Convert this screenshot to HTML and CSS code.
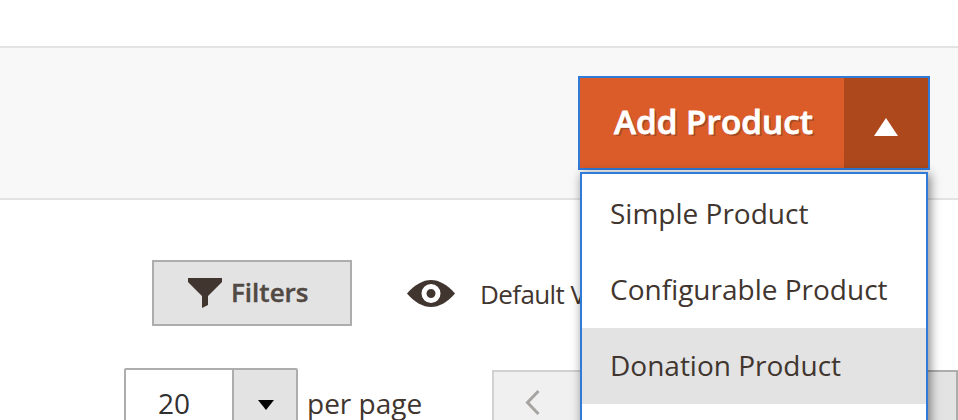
FILE: index.html
```html
<!DOCTYPE html>
<html lang="en">
<head>
<meta charset="utf-8">
<title>Products</title>
<link rel="stylesheet" href="styles.css">
</head>
<body>
<header class="page-actions">
  <div class="split">
    <button class="split-main"><span class="split-label">Add Product</span></button>
    <button class="split-toggle" aria-label="Toggle menu"><svg width="24" height="18" viewBox="0 0 24 18"><path d="M12 0L24 18H0z" fill="#fff"/></svg></button>
    <ul class="menu">
      <li class="menu-item">Simple Product</li>
      <li class="menu-item">Configurable Product</li>
      <li class="menu-item active">Donation Product</li>
      <li class="menu-item"></li>
    </ul>
  </div>
</header>
<main>
  <div class="tools">
    <button class="filters">
      <svg width="34" height="30" viewBox="0 0 34 30"><path d="M0 0H34V4L20 18V27L14 30V18L0 4z" fill="#41362f"/></svg>
      <span class="filters-label">Filters</span>
    </button>
    <div class="view">
      <svg width="48" height="27" viewBox="0 0 48 27"><path d="M0 13.5C8 4.500 16 0 24 0S40 4.500 48 13.500C40 22.500 32 27 24 27S8 22.500 0 13.500z" fill="#41362f"/><circle cx="24" cy="13.500" r="7" fill="none" stroke="#fff" stroke-width="5"/></svg>
      <span class="view-label">Default View</span>
    </div>
  </div>
  <div class="paging">
    <div class="select">
      <span class="select-value">20</span>
      <span class="select-arrow"><svg width="16" height="10" viewBox="0 0 16 10"><path d="M0 0H16L8 10z" fill="#000"/></svg></span>
    </div>
    <span class="per-page">per page</span>
    <div class="pager">
      <button class="prev" aria-label="Previous"><svg width="16" height="27" viewBox="0 0 16 27"><path d="M13.500 2L2.500 13.500L13.500 25" fill="none" stroke="#a6a3a0" stroke-width="3"/></svg></button>
      <button class="next" aria-label="Next"></button>
    </div>
  </div>
</main>
</body>
</html>
```
FILE: styles.css
```css
* { box-sizing: border-box; }
html { overflow: hidden; }
body { margin: 0; padding-top: 46px; height: 420px; overflow: hidden; background: #fff; color: #41362f; font-family: "Open Sans", sans-serif; font-size: 28px; }
button { margin: 0; padding: 0; border: 0; font: inherit; color: inherit; }
svg { display: block; flex: none; }
span { white-space: nowrap; }
.page-actions { height: 154px; padding: 28px 28px 0 0; display: flex; justify-content: flex-end; background: #f8f8f8; border: solid #e3e3e3; border-width: 2px 0; }
.split { position: relative; width: 352px; height: 94px; display: flex; border: 2px solid #2f7bd7; }
.split-main { width: 264px; padding: 0 0 4px 34px; text-align: left; background: #db5c29; color: #fff; font-size: 33.300px; font-weight: 600; line-height: 46px; text-shadow: 2px 2px 0 #a84a23; -webkit-text-stroke: .8px #fff; }
.split-toggle { flex: 1; display: flex; justify-content: center; padding-top: 40px; background: #ac481b; }
.menu { position: absolute; z-index: 2; top: 94px; left: 0; width: 348px; margin: 0; padding: 2px 0 0; list-style: none; background: #fff; border: 2px solid #2f7bd7; box-shadow: 2px 2px 10px rgba(0,0,0,.5); }
.menu-item { height: 76px; padding: 0 28px; line-height: 74px; }
.menu-item.active { background: #e3e3e3; }
.tools { display: flex; padding: 60px 0 0 152px; height: 168px; }
.filters { width: 200px; height: 66px; display: flex; align-items: center; padding-left: 34px; background: #e3e3e3; border: 2px solid #adadad; font-size: 26px; font-weight: 600; color: #514943; -webkit-text-stroke: .4px #514943; }
.filters-label { margin: 0 0 2px 9px; }
.view { height: 66px; margin-left: 55px; display: flex; align-items: center; font-size: 26px; letter-spacing: -.6px; }
.view-label { margin: 2px 0 0 25px; }
.paging { display: flex; height: 52px; overflow: hidden; }
.select { width: 174px; height: 64px; margin-left: 124px; display: flex; border: 2px solid #adadad; border-radius: 2px; color: #303030; }
.select-value { width: 106px; padding-left: 32px; line-height: 66px; }
.select-arrow { flex: 1; display: flex; justify-content: center; padding: 30px 0 0 2px; background: #e3e3e3; border-left: 2px solid #adadad; }
.per-page { width: 185px; margin-left: 9px; line-height: 70px; }
.pager { flex: 1; display: flex; justify-content: space-between; padding-top: 2px; }
.prev, .next { height: 64px; }
.prev { width: 94px; padding: 17px 0 0 31px; display: flex; background: #f0f0f0; border: 2px solid #d1d1d0; }
.next { width: 94px; background: #e3e3e3; border: 2px solid #adadad; }
```
